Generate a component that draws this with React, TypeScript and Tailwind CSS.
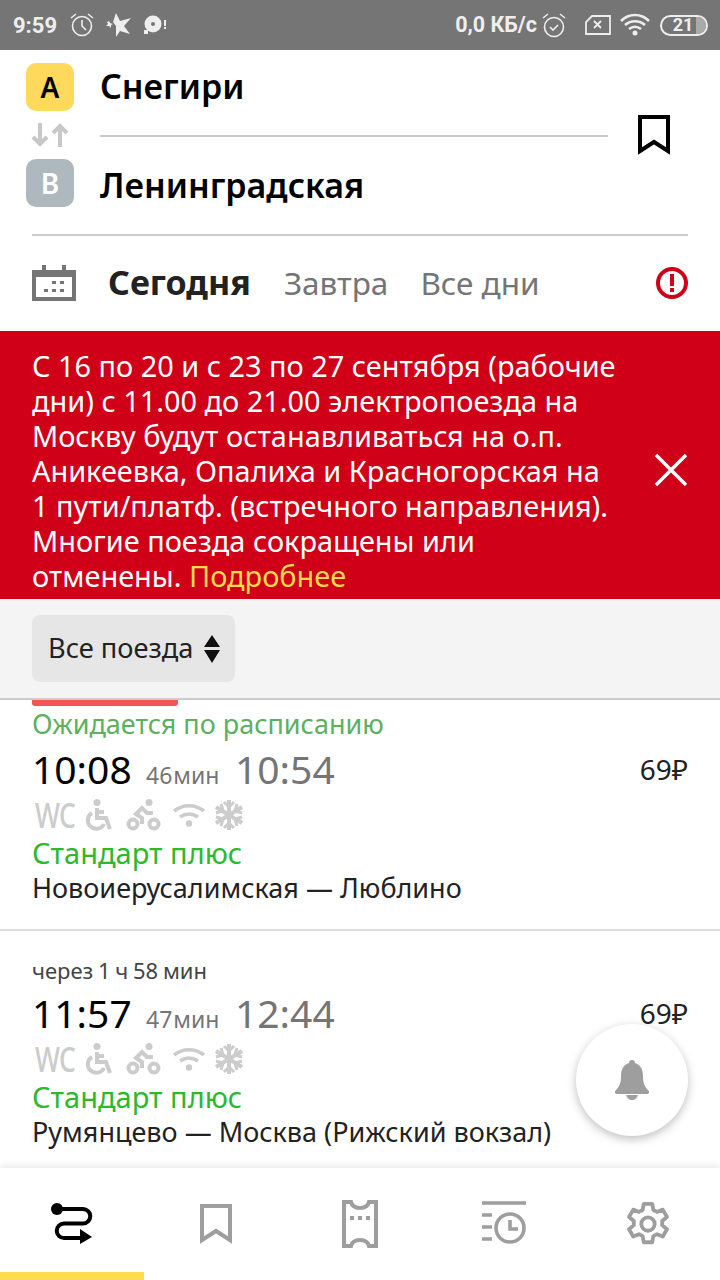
import React from 'react'

const font = { fontFamily: '"Noto Sans", sans-serif' }

const ArrowsIcon = () => (
  <svg width="38" height="26" viewBox="0 0 38 26" fill="none" stroke="#c8c8c8" strokeWidth="4">
    <path d="M9 1v21M2 15l7 7 7-7" />
    <path d="M29 25V4M22 11l7-7 7 7" />
  </svg>
)

const Bookmark = ({ color }: { color: string }) => (
  <svg width="32" height="40" viewBox="0 0 32 40" fill="none" stroke={color} strokeWidth="4">
    <path d="M2 2h28v34L16 27 2 36z" />
  </svg>
)

const Calendar = () => (
  <svg width="44" height="36" viewBox="0 0 44 36" fill="#757575">
    <path d="M10 0h4v5h16V0h4v5h10v31H0V5h10zM4 12v20h36V12z" />
    <rect x="20" y="16" width="4" height="3" />
    <rect x="28" y="16" width="4" height="3" />
    <rect x="12" y="24" width="4" height="3" />
    <rect x="20" y="24" width="4" height="3" />
    <rect x="28" y="24" width="4" height="3" />
  </svg>
)

const AlertIcon = () => (
  <svg width="32" height="32" viewBox="0 0 32 32">
    <circle cx="16" cy="16" r="14" fill="none" stroke="#cf0018" strokeWidth="4" />
    <rect x="14" y="7" width="4" height="12" fill="#cf0018" />
    <rect x="14" y="21" width="4" height="4" fill="#cf0018" />
  </svg>
)

const CloseIcon = () => (
  <svg width="34" height="34" viewBox="0 0 34 34" stroke="#fff" strokeWidth="3.5">
    <path d="M2 2l30 30M32 2L2 32" />
  </svg>
)

// иконки удобств поезда: инвалидное кресло, велосипед, wi-fi, кондиционер
const Amenities = () => (
  <div className="flex items-center h-[34px]">
    <span className="text-[34px] leading-none font-medium text-[#cccccc] w-[50px] ml-[3px] scale-x-[0.78] origin-left tracking-tight">WC</span>
    <svg width="30" height="32" viewBox="0 0 30 32" fill="none" stroke="#cccccc" strokeWidth="4">
      <circle cx="12" cy="3.500" r="3.500" fill="#cccccc" stroke="none" />
      <path d="M12 9v10h9l4 11" />
      <path d="M7 14a8.500 8.500 0 1 0 12 11" />
      <path d="M12 13h7" />
    </svg>
    <svg width="36" height="32" viewBox="0 0 36 32" fill="none" stroke="#cccccc" strokeWidth="4" className="ml-[11px]">
      <circle cx="7" cy="25" r="4.500" />
      <circle cx="28" cy="25" r="4.500" />
      <circle cx="23" cy="3.500" r="3.500" fill="#cccccc" stroke="none" />
      <path d="M27 14h-6l-5-5-6 6 6 4v6" />
    </svg>
    <svg width="34" height="24" viewBox="0 0 34 24" fill="none" stroke="#cccccc" strokeWidth="3.600" className="ml-[10px]">
      <path d="M2 8c9-7 21-7 30 0" />
      <path d="M8 14c6-4 12-4 18 0" />
      <circle cx="17" cy="20.500" r="3.200" fill="#cccccc" stroke="none" />
    </svg>
    <svg width="30" height="32" viewBox="0 0 30 32" fill="none" stroke="#cccccc" strokeWidth="4" className="ml-[8px]">
      <path d="M15 1v30M2 8l26 16M28 8L2 24" />
      <path d="M10 3l5 5 5-5M10 29l5-5 5 5M2 14l7-2-2-7M28 14l-7-2 2-7M2 18l7 2-2 7M28 18l-7 2 2 7" strokeWidth="3" />
    </svg>
  </div>
)

const TrainTimes = ({ from, dur, to, price }: { from: string; dur: string; to: string; price: string }) => (
  <div className="flex items-baseline h-[56px] leading-[56px]">
    <span className="text-[39px] text-black w-[114px]">{from}</span>
    <span className="text-[23px] text-[#757575] w-[89px] [word-spacing:-5px]">{dur}</span>
    <span className="text-[39px] text-[#757575]">{to}</span>
    <span className="ml-auto self-center text-[28px] text-[#222]">{price}</span>
  </div>
)

const StatusBar = () => (
  <div className="h-[50px] shrink-0 bg-[#757575] flex items-center pl-[13px] pr-[12px] text-[#eeeeee] font-bold" style={{ fontFamily: 'Roboto, sans-serif' }}>
    <span className="text-[22px]">9:59</span>
    <svg width="26" height="26" viewBox="0 0 26 26" fill="none" stroke="#eee" strokeWidth="1.600" className="ml-[12px]">
      <circle cx="13" cy="14" r="9.500" />
      <path d="M13 8v6l4 4M2 6l5-4M24 6l-5-4" />
    </svg>
    <svg width="26" height="26" viewBox="0 0 26 26" fill="#eee" className="ml-[11px]">
      <path d="M10 1l4 8 11-3-7 8 6 8-10-3-4 6V14L7 10z" />
      <path d="M3 9l1 2 3 1-2 1 0 3-2-2-3 0 2-2-1-2z" />
    </svg>
    <svg width="24" height="22" viewBox="0 0 24 22" className="ml-[11px]">
      <circle cx="10" cy="10" r="8.500" fill="#eee" />
      <circle cx="10" cy="10" r="2" fill="#757575" />
      <rect x="1" y="16" width="4" height="4" fill="#eee" />
      <rect x="21" y="6" width="2" height="6" fill="#eee" />
      <rect x="21" y="13" width="2" height="2" fill="#eee" />
    </svg>
    <span className="ml-auto text-[21.5px]">0,0 КБ/с</span>
    <svg width="26" height="26" viewBox="0 0 26 26" fill="none" stroke="#eee" strokeWidth="1.600" className="ml-[4px]">
      <circle cx="13" cy="15" r="9.500" />
      <path d="M9 15l3 3 5-5M2 6l5-4M24 6l-5-4" />
    </svg>
    <svg width="26" height="20" viewBox="0 0 26 20" fill="none" stroke="#eee" strokeWidth="1.800" className="ml-[18px]">
      <path d="M7 1h18v18H1V7z" />
      <path d="M9 6l7 7M16 6l-7 7" />
    </svg>
    <svg width="30" height="24" viewBox="0 0 30 24" fill="none" stroke="#eee" strokeWidth="2.600" className="ml-[9px]">
      <path d="M1 8c8-8 20-8 28 0M5 12c6-5 14-5 20 0M9 16c4-3 8-3 12 0" />
      <circle cx="15" cy="20" r="2.500" fill="#eee" stroke="none" />
    </svg>
    <div className="ml-[10px] w-[48px] h-[21px] rounded-full border-2 border-[#eeeeee] flex items-center justify-center text-[18px] leading-none relative overflow-hidden">
      <span className="pr-[2px]">21</span>
      <div className="absolute right-0 top-0 bottom-0 w-[10px] bg-[#aaaaaa]" />
    </div>
  </div>
)

const RouteHeader = () => (
  <div className="h-[186px] shrink-0 mx-[32px] border-b-2 border-[#cccccc] flex">
    <div className="w-[68px] -ml-[6px] mr-[6px] pt-[13px] shrink-0 flex flex-col items-start">
      <div className="w-[48px] h-[48px] rounded-[10px] bg-[#ffd95c] flex items-center justify-center text-[28px] font-semibold text-black">A</div>
      <div className="w-[48px] h-[48px] flex items-center justify-center">
        <ArrowsIcon />
      </div>
      <div className="w-[48px] h-[48px] rounded-[10px] bg-[#adb8bf] flex items-center justify-center text-[28px] font-semibold text-white">B</div>
    </div>
    <div className="w-[508px] shrink-0 flex flex-col">
      <div className="h-[87px] border-b-2 border-[#cccccc] flex items-center pb-[12px] text-[34px] font-semibold text-black">Снегири</div>
      <div className="flex-1 flex items-center text-[34px] font-semibold text-black">Ленинградская</div>
    </div>
    <div className="ml-[30px] pt-[65px]">
      <Bookmark color="#000" />
    </div>
  </div>
)

const DateTabs = () => (
  <div className="h-[95px] shrink-0 px-[32px] flex items-center text-[31.5px] pb-[2px]">
    <Calendar />
    <span className="ml-[32px] text-[34px] font-bold text-[#222222]">Сегодня</span>
    <span className="ml-[33px] text-[#757575]">Завтра</span>
    <span className="ml-[32px] text-[#757575]">Все дни</span>
    <div className="ml-auto">
      <AlertIcon />
    </div>
  </div>
)

const Notice = () => (
  <div className="h-[268px] shrink-0 bg-[#cf0018] px-[32px] pt-[17px] flex text-white text-[28.9px] leading-[35px]">
    <p className="w-[590px] shrink-0">
      С 16 по 20 и с 23 по 27 сентября (рабочие дни) с 11.00 до 21.00 электропоезда на Москву будут останавливаться на о.п. Аникеевка, Опалиха и Красногорская на 1 пути/платф. (встречного направления). Многие поезда сокращены или отменены. <span className="text-[#ffdb4d]">Подробнее</span>
    </p>
    <div className="ml-auto pt-[105px]">
      <CloseIcon />
    </div>
  </div>
)

const TrainFilter = () => (
  <div className="h-[101px] shrink-0 bg-[#f4f4f4] border-b-2 border-[#cccccc] px-[32px] pt-[16px]">
    <div className="w-[203px] h-[67px] rounded-[8px] bg-[#e6e6e6] flex items-center pl-[16px] text-[27.2px] text-[#222222]">
      Все поезда
      <svg width="18" height="28" viewBox="0 0 18 28" className="ml-[10px]">
        <path d="M9 0l8 12H1zM1 15h16l-8 13z" fill="#111" />
      </svg>
    </div>
  </div>
)

const Tabs = () => (
  <div className="h-[112px] shrink-0 relative bg-white grid grid-cols-5 shadow-[0_-2px_8px_rgba(0,0,0,0.1)]">
    <div className="flex justify-center pt-[35px]">
      <svg width="44" height="44" viewBox="0 0 44 44" fill="none" stroke="#000" strokeWidth="4">
        <circle cx="7" cy="6" r="6" fill="#000" stroke="none" />
        <path d="M7 6h26a7.250 7.250 0 0 1 0 14.500H14a7.250 7.250 0 0 0 0 14.500h16" />
        <path d="M30 26l12 8-12 7z" fill="#000" stroke="none" />
      </svg>
    </div>
    <div className="flex justify-center pt-[36px]">
      <Bookmark color="#9e9e9e" />
    </div>
    <div className="flex justify-center pt-[32px]">
      <svg width="36" height="48" viewBox="0 0 36 48" fill="none" stroke="#9e9e9e" strokeWidth="4">
        <path d="M2 2h7c1 4 4 6 9 6s8-2 9-6h7v44h-7c-1-4-4-6-9-6s-8 2-9 6H2z" />
        <path d="M8 18h4M16 18h4M24 18h4" />
      </svg>
    </div>
    <div className="flex justify-center pt-[33px]">
      <svg width="44" height="44" viewBox="0 0 44 44" fill="none" stroke="#9e9e9e" strokeWidth="3.600">
        <path d="M0 2h44M0 14h10M0 26h10M0 38h10" />
        <circle cx="28" cy="27" r="14" />
        <path d="M28 19v9h8" />
      </svg>
    </div>
    <div className="flex justify-center pt-[33px]">
      <svg width="46" height="46" viewBox="0 0 24 24" fill="none" stroke="#9e9e9e" strokeWidth="2">
        <circle cx="12" cy="12" r="3.500" />
        <path d="M9.800 1.500h4.400l.6 3.200 1.900 1 3-1.200 2.200 3.800-2.500 2.100v2.200l2.500 2.100-2.200 3.800-3-1.200-1.900 1-.6 3.200H9.800l-.6-3.200-1.900-1-3 1.200-2.200-3.800 2.500-2.100v-2.200L2.100 8.300l2.200-3.800 3 1.200 1.900-1z" strokeLinejoin="round" />
      </svg>
    </div>
    <div className="absolute left-0 bottom-0 w-[144px] h-[8px] bg-[#ffdb4d]" />
  </div>
)

const App = () => {
  return (
    <div className="w-[720px] h-[1280px] bg-white flex flex-col overflow-hidden" style={font}>
      <StatusBar />
      <RouteHeader />
      <DateTabs />
      <Notice />
      <TrainFilter />
      <div className="flex-1 relative overflow-hidden">
        <div className="ml-[32px] w-[146px] h-[6px] bg-[#f25555] rounded-b-[3px]" />
        <div className="h-[225px] border-b-2 border-[#dddddd] px-[32px]">
          <div className="text-[27px] leading-[36px] text-[#5cb060]">Ожидается по расписанию</div>
          <div className="-mt-[1px] mb-[1px]">
            <TrainTimes from="10:08" dur="46 мин" to="10:54" price="69₽" />
          </div>
          <Amenities />
          <div className="text-[29px] leading-[42px] text-[#2db82d]">Стандарт плюс</div>
          <div className="text-[27px] leading-[28px] text-[#222222]">Новоиерусалимская — Люблино</div>
        </div>
        <div className="px-[32px] pt-[23px]">
          <div className="text-[22px] leading-[33px] text-[#444444] [word-spacing:-1px]">через 1 ч 58 мин</div>
          <div className="-mt-[2px] mb-[1px]">
            <TrainTimes from="11:57" dur="47 мин" to="12:44" price="69₽" />
          </div>
          <Amenities />
          <div className="text-[29px] leading-[42px] text-[#2db82d]">Стандарт плюс</div>
          <div className="text-[27px] leading-[28px] text-[#222222]">Румянцево — Москва (Рижский вокзал)</div>
        </div>
        <div className="absolute left-[576px] top-[324px] w-[112px] h-[112px] rounded-full bg-white shadow-[0_3px_10px_rgba(0,0,0,0.25)] flex items-center justify-center">
          <svg width="36" height="40" viewBox="0 0 36 40" fill="#9e9e9e">
            <path d="M18 0c2 0 3 1 3 3 6 2 8 7 8 13 0 6 1 10 5 14 2 2 1 4-1 4H3c-2 0-3-2-1-4 4-4 5-8 5-14 0-6 2-11 8-13 0-2 1-3 3-3z" />
            <path d="M12 35h12c-1 3-3 5-6 5s-5-2-6-5z" />
          </svg>
        </div>
      </div>
      <Tabs />
    </div>
  )
}

export default App
